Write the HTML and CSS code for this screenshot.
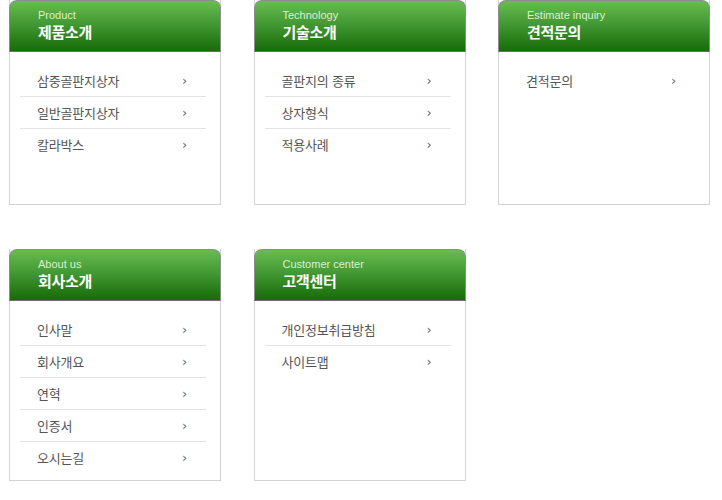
FILE: index.html
```html
<!DOCTYPE html>
<html lang="ko">
<head>
    <meta charset="UTF-8">
    <title>사이트맵</title>
    <link rel="stylesheet" href="styles.css">
</head>
<body>

    <!-- Sitemap boxes -->
    <div class="sitemap">

        <div class="box">
            <div class="box-head">
                <span class="sub">Product</span>
                <h2>제품소개</h2>
            </div>
            <ul class="menu">
                <li><a href="#">삼중골판지상자</a></li>
                <li><a href="#">일반골판지상자</a></li>
                <li><a href="#">칼라박스</a></li>
            </ul>
        </div>

        <div class="box">
            <div class="box-head">
                <span class="sub">Technology</span>
                <h2>기술소개</h2>
            </div>
            <ul class="menu">
                <li><a href="#">골판지의 종류</a></li>
                <li><a href="#">상자형식</a></li>
                <li><a href="#">적용사례</a></li>
            </ul>
        </div>

        <div class="box">
            <div class="box-head">
                <span class="sub">Estimate inquiry</span>
                <h2>견적문의</h2>
            </div>
            <ul class="menu">
                <li><a href="#">견적문의</a></li>
            </ul>
        </div>

        <div class="box">
            <div class="box-head">
                <span class="sub">About us</span>
                <h2>회사소개</h2>
            </div>
            <ul class="menu">
                <li><a href="#">인사말</a></li>
                <li><a href="#">회사개요</a></li>
                <li><a href="#">연혁</a></li>
                <li><a href="#">인증서</a></li>
                <li><a href="#">오시는길</a></li>
            </ul>
        </div>

        <div class="box">
            <div class="box-head">
                <span class="sub">Customer center</span>
                <h2>고객센터</h2>
            </div>
            <ul class="menu">
                <li><a href="#">개인정보취급방침</a></li>
                <li><a href="#">사이트맵</a></li>
            </ul>
        </div>

    </div>

</body>
</html>
```

FILE: styles.css
```css
/* General styling */
* {
    margin: 0;
    padding: 0;
    box-sizing: border-box;
}

body {
    background: #fff;
    font-family: "Noto Sans CJK KR", "Liberation Sans", sans-serif;
}

/* Grid of boxes */
.sitemap {
    display: grid;
    grid-template-columns: repeat(3, 212px);
    column-gap: 32.5px;
    row-gap: 44px;
    padding-left: 9px;
}

.box {
    min-height: 205px;
    border: 1px solid #d2d2d2;
    border-top: none;
    display: flex;
    flex-direction: column;
}

/* Green heading */
.box-head {
    height: 52px;
    margin: 0 -1px;
    padding: 8px 0 0 28px;
    border: 1px solid #8c8c8c;
    border-bottom-color: #6f6f6f;
    border-radius: 8px 8px 0 0;
    background: linear-gradient(to bottom, #68bd50 0%, #3f9530 50%, #176b08 100%);
    color: #fff;
}

.box-head .sub {
    display: block;
    font-family: "Liberation Sans", Arial, sans-serif;
    font-size: 11px;
    line-height: 13px;
    color: #dcefd4;
}

.box-head h2 {
    font-size: 15px;
    font-weight: bold;
    line-height: 19px;
    letter-spacing: -0.3px;
}

/* Menu list */
.menu {
    list-style: none;
    margin: 13px 14px 7px 10px;
}

.menu li {
    border-bottom: 1px solid #e3e3e3;
}

.menu li:last-child {
    border-bottom: none;
}

.menu a {
    display: flex;
    justify-content: space-between;
    align-items: center;
    height: 31px;
    padding: 0 19px 0 17px;
    font-size: 13px;
    color: #555;
    text-decoration: none;
    letter-spacing: -0.2px;
}

.menu a::after {
    content: '\203A';
    font-family: "DejaVu Sans", sans-serif;
    font-size: 13px;
    color: #666;
}
```
